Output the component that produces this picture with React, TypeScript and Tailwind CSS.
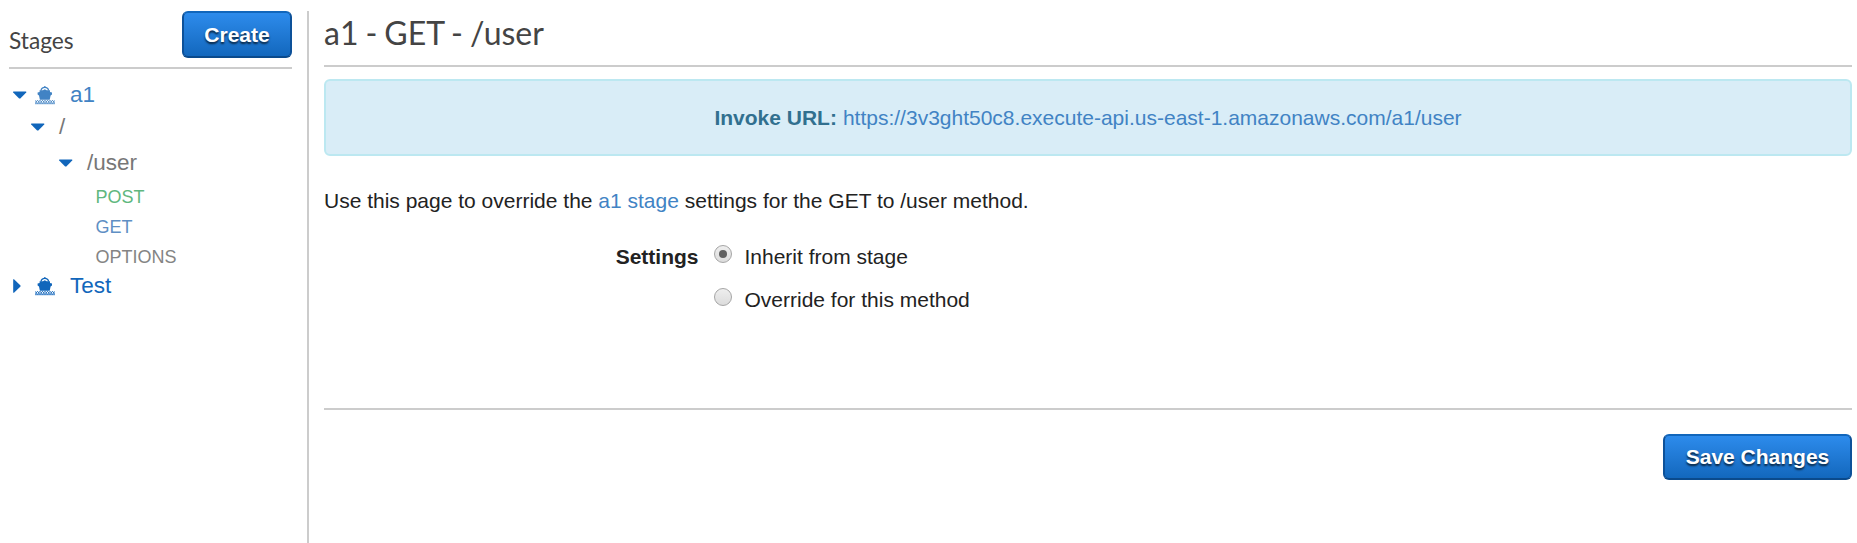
import React from "react";

function Caret({ open }: { open: boolean }) {
  return open ? (
    <svg width="14" height="8" viewBox="0 0 14 8" className="block text-[#1166bb]">
      <path d="M0.2 0.4h13v1L7.300 7.600H6.100L0.200 1.400z" fill="currentColor" />
    </svg>
  ) : (
    <svg width="8" height="14" viewBox="0 0 8 14" className="block text-[#1166bb]">
      <path d="M0.2 0.3v13.400h0.800L7.500 7.600V6.400L1 0.300z" fill="currentColor" />
    </svg>
  );
}

function Ship() {
  return (
    <svg width="20" height="19" viewBox="0 0 20 19" className="block shrink-0">
      <path d="M6 4.500C6.300 2.500 7.800 1.300 9.800 1.300S13.300 2.500 13.600 4.500" fill="none" stroke="currentColor" strokeWidth="1.3" />
      <path d="M9 0.200h1.600v1.500H9z" fill="currentColor" />
      <path
        d="M4.600 4.200H8L9.800 3.200l1.800 1H15v1.900l2 .5v1.900L15.600 9.600 14.700 13.800H4.900L4 9.600 2.600 8.500V6.600l2-.5z"
        fill="currentColor"
      />
      <path
        d="M0 14.300l1.250 1.500 1.250-1.500 1.250 1.500 1.250-1.500 1.250 1.500 1.250-1.500 1.250 1.500 1.250-1.500 1.250 1.500 1.250-1.500 1.250 1.500 1.250-1.500 1.250 1.500 1.250-1.500 1.250 1.500 1.250-1.500"
        fill="none"
        stroke="currentColor"
        strokeWidth="1"
      />
      <path
        d="M0 17.400l1.250-1.500 1.250 1.500 1.250-1.500 1.250 1.500 1.250-1.500 1.250 1.500 1.250-1.500 1.250 1.500 1.250-1.500 1.250 1.500 1.250-1.500 1.250 1.500 1.250-1.500 1.250 1.500 1.250-1.500 1.250 1.500M0 17.700h20"
        fill="none"
        stroke="currentColor"
        strokeWidth="0.8"
      />
    </svg>
  );
}

function BlueButton({ children, className }: { children: React.ReactNode; className: string }) {
  return (
    <button
      className={
        "flex items-center justify-center rounded-[6px] border-2 border-t-[#1166bb] border-x-[#0d5199] border-b-[#0a4a8c] bg-linear-to-b from-[#2e8dee] to-[#1166bb] bg-origin-border text-[21px] font-bold text-white [text-shadow:0_2px_2px_#0a2540] " +
        className
      }
    >
      {children}
    </button>
  );
}

function Radio({ checked }: { checked?: boolean }) {
  return (
    <span className="flex size-[18px] shrink-0 items-center justify-center rounded-full border border-[#a5a5a5] bg-linear-to-b from-[#eeeeee] to-[#dcdcdc]">
      {checked && <span className="size-[8px] rounded-full bg-[#606060]" />}
    </span>
  );
}

export default function App() {
  return (
    <div className="flex h-[543px] w-full overflow-hidden bg-white pt-[11px] font-['Liberation_Sans',Arial,sans-serif] text-[21px] text-[#222222]">
      <aside className="ml-[9px] w-[283px] shrink-0">
        <header className="flex h-[58px] items-start justify-between border-b-2 border-[#cccccc]">
          <h2 className="pt-[13px] font-[Lato,sans-serif] text-[22.7px] leading-[34px] text-[#444444]">Stages</h2>
          <BlueButton className="h-[47px] w-[110px]">Create</BlueButton>
        </header>
        <nav className="pt-[10px] text-[22.5px] leading-[32px] text-[#777777]">
          <div className="flex h-8 items-center pl-1 text-[#4183c4]">
            <Caret open />
            <span className="ml-[8px]"><Ship /></span>
            <span className="ml-[15px]">a1</span>
          </div>
          <div className="flex h-8 items-center pl-[22px]">
            <Caret open />
            <span className="ml-[14px]">/</span>
          </div>
          <div className="mt-1 flex h-8 items-center pl-[50px]">
            <Caret open />
            <span className="ml-[14px]">/user</span>
          </div>
          <ul className="mt-[3px] pl-[86.5px] text-[18px] leading-[30px]">
            <li className="text-[#60b77e]">POST</li>
            <li className="text-[#5f8fc4]">GET</li>
            <li className="text-[#848484]">OPTIONS</li>
          </ul>
          <div className="-mt-0.5 flex h-8 items-center pl-1 text-[#1166bb]">
            <Caret open={false} />
            <span className="ml-[14px]"><Ship /></span>
            <span className="ml-[15px]">Test</span>
          </div>
        </nav>
      </aside>
      <main className="ml-[15px] mr-[5px] flex-1 border-l-2 border-[#cccccc] pl-[15px]">
        <h1 className="h-[56px] border-b-2 border-[#cccccc] font-[Lato,sans-serif] text-[32px] leading-[43px] text-[#444444] [word-spacing:-1.2px]">
          a1 - GET - /user
        </h1>
        <div className="mt-3 flex h-[77px] items-center justify-center rounded-[6px] border-2 border-[#bce8f1] bg-[#d9edf7] text-[#31708f]">
          <strong>Invoke URL:</strong>
          <a className="ml-[6px] text-[#4183c4]">https://3v3ght50c8.execute-api.us-east-1.amazonaws.com/a1/user</a>
        </div>
        <p className="mt-[30px] leading-[30px]">
          Use this page to override the <a className="text-[#4183c4]">a1 stage</a> settings for the GET to /user method.
        </p>
        <div className="mt-[26px] flex leading-[30px]">
          <strong className="w-[374.5px] text-right">Settings</strong>
          <div className="ml-[15.5px]">
            <label className="flex h-[43px] items-start">
              <span className="pt-[3px]"><Radio checked /></span>
              <span className="ml-[12.5px]">Inherit from stage</span>
            </label>
            <label className="flex h-[43px] items-start">
              <span className="pt-[3px]"><Radio /></span>
              <span className="ml-[12.5px]">Override for this method</span>
            </label>
          </div>
        </div>
        <footer className="mt-[80px] flex justify-end border-t-2 border-[#cccccc] pt-6">
          <BlueButton className="h-[46px] w-[189px]">Save Changes</BlueButton>
        </footer>
      </main>
    </div>
  );
}
